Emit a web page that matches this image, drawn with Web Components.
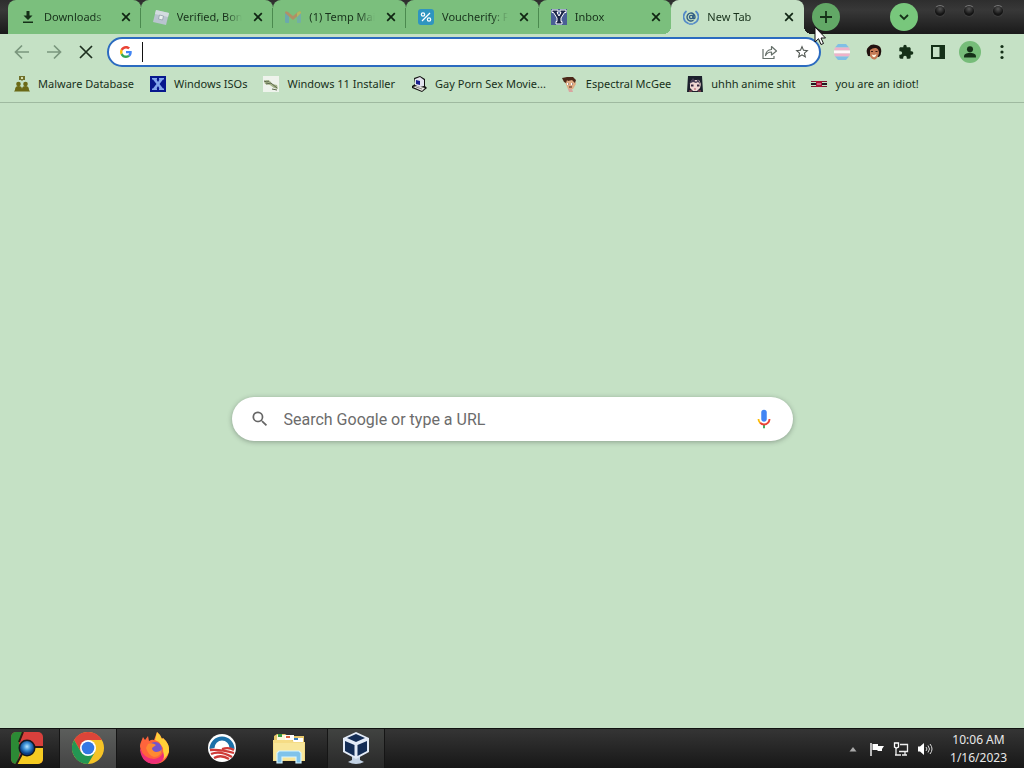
<!DOCTYPE html>
<html lang="en">
<head>
<meta charset="utf-8">
<title>New Tab</title>
<style>
    :root {
        --page: #c5e1c5;
        --tab: #7bbf7d;
        --ink: #17301a;
        --ui-font: "Noto Sans", "Open Sans", sans-serif;
    }
    html, body {
        height: 100%;
        margin: 0;
    }
    body {
        background: var(--page);
        color: var(--ink);
        font: 11px/16px var(--ui-font);
        overflow: hidden;
    }
</style>
</head>
<body>
<desktop-screen></desktop-screen>

<script>
const icons = {
    download: ['0 0 16 16', '<path d="M6.500 2h3v4.500h3L8 11 3.500 6.500h3zM3 12.500h10v1.500H3z" fill="#153018"/>'],
    roblox: ['0 0 16 16', '<path d="M3 1l13 3-3 12-13-3z" fill="#b9c4cf"/><path d="M3 1l13 3-1 4L2 5z" fill="#d3dcdf"/><path d="M6.500 6l4 1-1 4-4-1z" fill="#e9f1ee" stroke="#8c9ba5" stroke-width=".7"/>'],
    gmail: ['0 0 16 16', '<g opacity=".5"><path d="M0 3h4v11H1.500Q0 14 0 12.500z" fill="#5e92dc"/><path d="M12 3h4v9.500q0 1.500-1.500 1.500H12z" fill="#6da0c9"/><path d="M0 4q0-3 3-1l5 4 5-4q3-2 3 1L8 11z" fill="#e8634e"/><path d="M12 4l1-1q3-2 3 1l-4 4z" fill="#e9b544"/></g>'],
    voucherify: ['0 0 16 16', '<rect width="16" height="16" rx="3" fill="#2f95c0"/><path d="M4 12l8-8" stroke="#fff" stroke-width="1.300"/><circle cx="5" cy="5.500" r="1.700" fill="none" stroke="#fff" stroke-width="1.200"/><circle cx="11" cy="10.500" r="1.700" fill="none" stroke="#fff" stroke-width="1.200"/>'],
    inbox: ['0 0 16 16', '<path d="M0 0h16v16H0z" fill="#4a5f96"/><path d="M1 1h6v2.500H6L8 7l2-3.500H9V1h6v2.500h-1.500L10 9v3.500h1V15H5v-2.500h1V9L2.500 3.500H1z" fill="#1b2548" stroke="#fff" stroke-width="1"/>'],
    swirl: ['0 0 16 16', '<g fill="none" stroke-linecap="round"><path d="M3 2.500A7 7 0 0 0 5 14.300M13 2.500A7 7 0 0 1 11 14.300M6.500 15h3" stroke="#5289c8" stroke-width="1.700"/><path d="M10 11.500A4 4 0 1 1 12 8q0 2-1.800 1.500V6" stroke="#315e83" stroke-width="1.400"/><circle cx="8.200" cy="8" r="1.700" stroke="#315e83" stroke-width="1.300"/></g>'],
    close: ['0 0 16 16', '<path d="M4.200 4.200l7.600 7.600M11.800 4.200l-7.600 7.600" stroke="#102513" stroke-width="1.700"/>'],
    plus: ['0 0 16 16', '<path d="M8 2v12M2 8h12" stroke="#153018" stroke-width="1.800"/>'],
    chevron: ['0 0 16 16', '<path d="M4 6l4 4 4-4" fill="none" stroke="#153018" stroke-width="1.800"/>'],
    back: ['0 0 16 16', '<path d="M15 8H2M8 1.500L1.500 8 8 14.500" fill="none" stroke="#7a967d" stroke-width="1.700"/>'],
    forward: ['0 0 16 16', '<path d="M1 8h13M8 1.500L14.500 8 8 14.500" fill="none" stroke="#7a967d" stroke-width="1.700"/>'],
    stop: ['0 0 16 16', '<path d="M2 2l12 12M14 2L2 14" stroke="#1d2f1f" stroke-width="1.700"/>'],
    google: ['0 0 48 48', '<path fill="#ea4335" d="M24 9.500c3.540 0 6.710 1.220 9.210 3.600l6.850-6.850C35.900 2.380 30.470 0 24 0 14.620 0 6.510 5.380 2.560 13.220l7.980 6.190C12.430 13.720 17.740 9.500 24 9.500z"/><path fill="#4285f4" d="M46.980 24.550c0-1.570-.15-3.090-.38-4.550H24v9.020h12.940c-.58 2.960-2.260 5.480-4.780 7.180l7.730 6c4.510-4.180 7.090-10.360 7.090-17.650z"/><path fill="#fbbc05" d="M10.530 28.590A14.500 14.500 0 0 1 9.770 24c0-1.600.27-3.140.76-4.590l-7.980-6.190A23.900 23.900 0 0 0 0 24c0 3.880.92 7.540 2.560 10.780z"/><path fill="#34a853" d="M24 48c6.480 0 11.930-2.130 15.890-5.810l-7.730-6c-2.150 1.450-4.920 2.300-8.160 2.300-6.260 0-11.570-4.220-13.470-9.910l-7.980 6.190C6.510 42.620 14.620 48 24 48z"/>'],
    share: ['0 0 16 16', '<path d="M1 5v9.500h11V12M3.500 11.500q.5-5.500 6-6V2.500l5 4.500-5 4V8q-4 0-6 3.500z" fill="none" stroke="#66706a" stroke-width="1.200" stroke-linejoin="round"/>'],
    star: ['0 0 24 24', '<path d="M22 9.240l-7.190-.62L12 2 9.190 8.630 2 9.240l5.460 4.730L5.820 21 12 17.270 18.180 21l-1.630-7.030zM12 15.400l-3.760 2.270 1-4.280-3.320-2.880 4.380-.38L12 6.100l1.710 4.040 4.380.38-3.320 2.880 1 4.280z" fill="#4f5550"/>'],
    stripes: ['0 0 16 16', '<path d="M4 0h8l3 3.500H1z" fill="#80bfe5"/><path d="M1 3.500h14l1 3H0z" fill="#efb2ca"/><path d="M0 6.500h16v3H0z" fill="#fff8fa"/><path d="M0 9.500h16l-1 3H1z" fill="#efb2ca"/><path d="M1 12.500h14L12 16H4z" fill="#80bfe5"/>'],
    face: ['0 0 16 16', '<path d="M2 12Q-1 6 2.500 3 5 0 9 .7q5 .3 6 4.300 1 5-2 8z" fill="#21110f"/><path d="M4 6q3-2.500 6-2 3 1 3 5-1 5-4 6.500-3 .5-5-3.500z" fill="#c67a54"/><path d="M5 7.500h2M9.500 7.500h2" stroke="#3b1c14"/><path d="M5.500 10.500q3 1 5-.5-.5 3-2 3.300-2 0-3-2.800z" fill="#fff3df"/>'],
    puzzle: ['0 0 24 24', '<path d="M20.500 11H19V7c0-1.100-.9-2-2-2h-4V3.500a2.500 2.500 0 0 0-5 0V5H4c-1.100 0-2 .9-2 2v3.800h1.500a2.700 2.700 0 0 1 0 5.400H2V20c0 1.100.9 2 2 2h3.800v-1.500a2.700 2.700 0 0 1 5.400 0V22H17c1.100 0 2-.9 2-2v-4h1.500a2.500 2.500 0 0 0 0-5z" fill="#153018"/>'],
    panel: ['0 0 16 16', '<path d="M1 1h14v14H1zm2 2v10h6.500V3z" fill="#153018" fill-rule="evenodd"/>'],
    person: ['0 0 24 24', '<circle cx="12" cy="12" r="12" fill="#76bc79"/><circle cx="12" cy="9" r="3.300" fill="#153018"/><path d="M5.500 18v-1.500c0-3 4.500-3.800 6.500-3.800s6.500.8 6.500 3.800V18z" fill="#153018"/>'],
    dots: ['0 0 16 16', '<g fill="#153018"><circle cx="8" cy="2.500" r="1.600"/><circle cx="8" cy="8" r="1.600"/><circle cx="8" cy="13.500" r="1.600"/></g>'],
    people: ['0 0 16 16', '<path d="M5 0h6v4H9L8 5 7 4H5z" fill="#70702b"/><path d="M7 1h2v2H7z" fill="#d6dfaa"/><circle cx="4.500" cy="8" r="2.300" fill="#6b6916"/><circle cx="11.500" cy="8" r="2.300" fill="#6b6916"/><path d="M1 14q0-4 3.500-4T8 13q0-3 3.500-3t3.500 4l1 1.500H0z" fill="#6b6916"/>'],
    bluex: ['0 0 16 16', '<path d="M0 0h16v16H0z" fill="#07178d"/><path d="M2 2h5v1.500H6.500L8 6l1.500-2.500H9V2h5v1.500h-1L9.500 8l3.500 4.500h1V14H9v-1.500h.5L8 10l-1.500 2.500H7V14H2v-1.500h1L6.500 8 3 3.500H2z" fill="#83a6ed"/>'],
    sketch: ['0 0 16 16', '<path d="M0 0h16v16H0z" fill="#eef3ec"/><path d="M1 5q3-2 6 0l2 3 5 1 1 4-4-1-4-3-5-1z" fill="#a5b48a"/><path d="M1 5l3 1 2-1M3 8l5-1 6 5M9 13l5 1" fill="none" stroke="#5b674c"/>'],
    computer: ['0 0 16 16', '<path d="M3 2l6-2 5 3v7l2 2-5 4-10-4v-2l3-2z" fill="#111"/><path d="M4 3l5-2 4 3v6l-4 1-5-2z" fill="#e3e3ee"/><path d="M5 4l4 1v4L5 8z" fill="#1b208f"/><path d="M2 11l4-1 8 2-3 3z" fill="#e8e8df"/><path d="M5 11l6 2" stroke="#888"/>'],
    cartoon: ['0 0 16 16', '<path d="M3 6l2-3h7l2 5-3 5H6z" fill="#e0ad84"/><path d="M6 13h4l1 3H7z" fill="#d9a5a0"/><path d="M0 2l5-1h6l3 3-1 3-3-3-4 1-1-1-1 3-2-1z" fill="#4c2819"/><path d="M5 8h2m2 0h2" stroke="#fff" stroke-width="2"/><path d="M6 8h1m3 0h1M7 11h3" stroke="#54231b"/>'],
    anime: ['0 0 16 16', '<path d="M1 0h14l1 16H0z" fill="#1c202c"/><path d="M3 7l2-3h7l2 4-1 4-3 3H6l-3-3z" fill="#f1d8d3"/><path d="M2 8l4-6 3 4 2-3 3 6-3-3-2 1-3-1z" fill="#4a4058"/><path d="M4 9.500h2.500m3.500 0h2.500" stroke="#35243e" stroke-width="2"/><path d="M7 13h2M2 15h3m6 0h3" stroke="#b05061"/>'],
    flagline: ['0 0 16 16', '<path d="M0 5.500h16M0 10.500h16" stroke="#7e1830"/><path d="M0 8h16" stroke="#221820" stroke-width="2"/><path d="M5 5h6v6H5z" fill="#a81234"/><path d="M6 8h4" stroke="#efb2ca"/>'],
    search: ['0 0 24 24', '<path d="M15.500 14h-.79l-.28-.27A6.500 6.500 0 1 0 13.730 14.430l.27.28v.79l5 4.990L20.490 19zM9.500 14a4.500 4.500 0 1 1 0-9 4.500 4.500 0 0 1 0 9z" fill="#666"/>'],
    mic: ['0 0 24 24', '<path d="M12 15c1.660 0 3-1.310 3-2.970V5a3 3 0 0 0-6 0v7.030C9 13.690 10.340 15 12 15z" fill="#4285f4"/><path d="M11 18.080h2V22h-2z" fill="#34a853"/><path d="M7.050 16.870A6.800 6.800 0 0 1 5 12h2c0 1.450.56 2.420 1.470 3.380z" fill="#fbbc04"/><path d="M12 16.930a4.970 4.970 0 0 1-3.540-1.550l-1.410 1.490A6.980 6.980 0 0 0 12 19c3.870 0 6.990-2.920 6.990-7h-1.990c0 2.920-2.240 4.930-5 4.930z" fill="#ea4335"/>'],
    start: ['0 0 32 32', '<clipPath id="c"><rect width="32" height="32" rx="5"/></clipPath><radialGradient id="b" cy=".4"><stop offset="0" stop-color="#b9e6ff"/><stop offset=".5" stop-color="#3d93d6"/><stop offset="1" stop-color="#0b3f86"/></radialGradient><g clip-path="url(#c)"><path d="M0 0h32v32H0z" fill="#d8403c"/><path d="M0 0h12l-4 10 1 10-3 12H0z" fill="#2c8a35"/><path d="M16 16h16v16H5l5-9z" fill="#f5cb22"/><path d="M8 10l4-10M20 15h12M11 22L5 33" fill="none" stroke="#2a1a12" stroke-width="2"/></g><circle cx="16" cy="16" r="8.500" fill="#15181d"/><circle cx="16" cy="16" r="7" fill="url(#b)"/>'],
    chrome: ['0 0 32 32', '<circle cx="16" cy="16" r="16" fill="#f5c326"/><path d="M2.140 8A16 16 0 0 1 29.860 8H16l-7 12z" fill="#dc4539"/><path d="M2.140 8A16 16 0 0 0 16 32l7-12-7 3-7-3z" fill="#249653"/><circle cx="16" cy="16" r="8" fill="#fff"/><circle cx="16" cy="16" r="6.300" fill="#3478e4"/>'],
    firefox: ['0 0 32 32', '<path d="M2 10l2-5 2 3 3-4 1 5q3-2 5-1l3-8q4 3 5 7l1-1q6 5 6 12a14 14 0 0 1-28 0q-2-4 0-8z" fill="#ff643c"/><path d="M18 0q4 3 5 7l1-1q7 6 6 14-4 10-14 9 10-3 8-13l-4-6-4-2z" fill="#ffcf38"/><path d="M1 16q4 11 14 11 7-1 9-7 4 9-8 12Q3 32 1 18z" fill="#ed2f77"/><circle cx="16" cy="17" r="7" fill="#7655cd"/><path d="M9 12q4-2 8 1l-4 3q0 3 4 4 4 0 6-3-1 8-8 8-6-2-8-9z" fill="#ff8a31"/>'],
    sunrise: ['0 0 28 28', '<circle cx="14" cy="14" r="14" fill="#fff"/><path d="M1.500 15a12.500 12.500 0 0 1 25 0l-5-1a7.500 7.500 0 0 0-15 0z" fill="#1b70a8"/><g fill="none" stroke="#cf3b38" stroke-width="2.300"><path d="M2 16q10-1 24 3M3 20q9-4 21 3M6 24q7-4 15 1M14 15q7-2 12 1"/></g>'],
    folder: ['0 0 32 32', '<path d="M1 4l3-2h8l3 2h16v25H1z" fill="#e7c76a"/><path d="M4 3h9v5H4z" fill="#fff9dd"/><path d="M5 2h4v3H5z" fill="#3b9b42"/><path d="M12 3h9v5h-9z" fill="#fff"/><path d="M13 4h4v2h-4z" fill="#df6540"/><path d="M20 6h10v4H20z" fill="#fff"/><path d="M21 6h4v2h-4z" fill="#357bb8"/><path d="M0 8h18l3 2h11v19H0z" fill="#f5dc85"/><path d="M1 11h30v17H1z" fill="#f8e69a"/><path d="M4 31V21l2-2h20l2 2v10h-5v-6H9v6z" fill="#7fc3ea" stroke="#d6f5ff" stroke-width="1.200"/>'],
    box: ['0 0 32 32', '<path d="M12 24h8v4l4 2q-8 4-16 0l4-2z" fill="#c3d2e4"/><path d="M16 0l13 6v14l-13 7-13-7V6z" fill="#e3ebf7"/><path d="M16 2l9 4-9 4-9-4zM5 9l9.500 4v11L5 19zM27 9l-9.500 4v11l9.500-5z" fill="#142d55"/>'],
    up: ['0 0 16 16', '<path d="M4.500 10.500L8 6l3.500 4.500z" fill="#a9a9a9"/>'],
    flag: ['0 0 16 16', '<path d="M2 2v13" stroke="#eee" stroke-width="1.500"/><path d="M3.500 3H9v2h6l-2 3v2H9L8 9H3.500z" fill="#fff"/>'],
    network: ['0 0 16 16', '<path d="M7 3.500h7.500v7H6M9 14h5m-2-3v3M3 7v7M2 14h6" fill="none" stroke="#eee" stroke-width="1.300"/><path d="M1.500 2h4v4l-2 1-2-1z" fill="none" stroke="#fff" stroke-width="1.300"/>'],
    speaker: ['0 0 16 16', '<path d="M1 5.500h2L7 2v12l-4-3.500H1z" fill="#fff"/><path d="M9 6q2 2 0 4M11 4.500q3 3.500 0 7M13 3q4 5 0 10" fill="none" stroke="#ddd"/>'],
    cursor: ['0 0 12 20', '<path d="M1 1v15l3.500-3.300L7 18.500l2.500-1-2.500-5.500h4.500z" fill="#fff" stroke="#111" stroke-width="1"/>']
};

class UiIcon extends HTMLElement {
    constructor() {
        super();
        this.attachShadow({ mode: 'open' });
    }

    connectedCallback() {
        const [box, shapes] = icons[this.getAttribute('name')];
        const size = this.getAttribute('size') || 16;
        this.shadowRoot.innerHTML = `
            <style>
                :host { display: block; flex: none; width: ${size}px; height: ${size}px; }
                svg { display: block; width: 100%; height: 100%; }
            </style>
            <svg viewBox="${box}" aria-hidden="true">${shapes}</svg>
        `;
    }
}

class BrowserTab extends HTMLElement {
    constructor() {
        super();
        this.attachShadow({ mode: 'open' });
    }

    connectedCallback() {
        this.shadowRoot.innerHTML = `
            <style>
                :host {
                    display: flex;
                    flex: 1;
                    min-width: 0;
                    box-sizing: border-box;
                    align-items: center;
                    gap: 8px;
                    padding: 0 7px 0 12px;
                    background: var(--tab);
                    border-radius: 8px 8px 0 0;
                }
                :host([divided]) { background: linear-gradient(#4b8a4f, #4b8a4f) right 8px / 1px 20px no-repeat var(--tab); background-position: right 8px; }
                :host([active]) { position: relative; background: var(--page); }
                /* curved feet of the selected tab */
                :host([active])::before, :host([active])::after {
                    content: "";
                    position: absolute;
                    bottom: 0;
                    width: 8px;
                    height: 8px;
                }
                :host([active])::before { right: 100%; background: radial-gradient(circle at 0 0, transparent 8px, var(--page) 8px); }
                :host([active])::after { left: 100%; background: radial-gradient(circle at 100% 0, transparent 8px, var(--page) 8px); }
                .title {
                    flex: 1;
                    overflow: hidden;
                    white-space: nowrap;
                    -webkit-mask-image: linear-gradient(to right, #000 75%, transparent);
                    mask-image: linear-gradient(to right, #000 75%, transparent);
                }
                button { border: 0; padding: 0; background: none; }
            </style>
            <ui-icon name="${this.getAttribute('icon')}"></ui-icon>
            <span class="title"><slot></slot></span>
            <button aria-label="Close tab"><ui-icon name="close"></ui-icon></button>
        `;
    }
}

class TabStrip extends HTMLElement {
    constructor() {
        super();
        this.attachShadow({ mode: 'open' });
        this.shadowRoot.innerHTML = `
            <style>
                :host {
                    display: flex;
                    height: 34px;
                    background: linear-gradient(#2e2e2e, #383838 30%, #1a1a1a);
                }
                .tabs { display: flex; flex: 1; min-width: 0; padding-left: 8px; }
                .controls { display: flex; align-items: center; padding: 0 20px 0 8px; }
                .round {
                    display: grid;
                    place-items: center;
                    width: 28px;
                    height: 28px;
                    margin-right: 50px;
                    padding: 0;
                    border: 0;
                    border-radius: 50%;
                    background: #62a866;
                }
                .search { margin-right: 16px; background: #78c77c; }
                .lights { display: flex; gap: 17px; align-self: flex-start; padding-top: 5px; }
                .lights button {
                    width: 12px;
                    height: 12px;
                    padding: 0;
                    border: 1px solid #3c3c3c;
                    border-top-color: #777;
                    border-radius: 50%;
                    background: radial-gradient(circle at 50% 30%, #555, #151515 60%);
                }
            </style>
            <div class="tabs">
                <browser-tab icon="download" divided>Downloads</browser-tab>
                <browser-tab icon="roblox" divided>Verified, Bon</browser-tab>
                <browser-tab icon="gmail" divided>(1) Temp Mail</browser-tab>
                <browser-tab icon="voucherify" divided>Voucherify: F</browser-tab>
                <browser-tab icon="inbox">Inbox</browser-tab>
                <browser-tab icon="swirl" active>New Tab</browser-tab>
            </div>
            <div class="controls">
                <button class="round" aria-label="New tab"><ui-icon name="plus"></ui-icon></button>
                <button class="round search" aria-label="Search tabs"><ui-icon name="chevron"></ui-icon></button>
                <div class="lights">
                    <button aria-label="Minimize"></button>
                    <button aria-label="Maximize"></button>
                    <button aria-label="Close"></button>
                </div>
            </div>
        `;
    }
}

class BrowserToolbar extends HTMLElement {
    constructor() {
        super();
        this.attachShadow({ mode: 'open' });
        this.shadowRoot.innerHTML = `
            <style>
                :host { display: flex; align-items: center; height: 36px; padding: 0 6px; }
                button { display: grid; place-items: center; width: 32px; height: 32px; padding: 0; border: 0; background: none; }
                .address {
                    display: flex;
                    flex: 1;
                    box-sizing: border-box;
                    align-items: center;
                    height: 30px;
                    margin: 0 5px;
                    padding: 0 1px 0 11px;
                    border: 2px solid #2b6bc0;
                    border-radius: 15px;
                    background: #fff;
                }
                .address ui-icon[name="google"] { margin-right: 10px; }
                .caret { width: 1px; height: 20px; background: #111; }
                input { flex: 1; min-width: 0; padding: 0; border: 0; outline: 0; background: none; font: 14px/20px var(--ui-font); }
            </style>
            <button aria-label="Back"><ui-icon name="back"></ui-icon></button>
            <button aria-label="Forward"><ui-icon name="forward"></ui-icon></button>
            <button aria-label="Stop"><ui-icon name="stop"></ui-icon></button>
            <div class="address">
                <ui-icon name="google" size="12"></ui-icon>
                <span class="caret"></span>
                <input type="text" aria-label="Address and search bar">
                <button aria-label="Share"><ui-icon name="share"></ui-icon></button>
                <button aria-label="Bookmark"><ui-icon name="star"></ui-icon></button>
            </div>
            <button aria-label="Pride extension"><ui-icon name="stripes"></ui-icon></button>
            <button aria-label="Face extension"><ui-icon name="face"></ui-icon></button>
            <button aria-label="Extensions"><ui-icon name="puzzle"></ui-icon></button>
            <button aria-label="Side panel"><ui-icon name="panel"></ui-icon></button>
            <button aria-label="Profile"><ui-icon name="person" size="22"></ui-icon></button>
            <button aria-label="Menu"><ui-icon name="dots"></ui-icon></button>
        `;
    }
}

class BookmarkLink extends HTMLElement {
    constructor() {
        super();
        this.attachShadow({ mode: 'open' });
    }

    connectedCallback() {
        this.shadowRoot.innerHTML = `
            <style>
                :host { display: block; }
                a { display: flex; align-items: center; gap: 8px; color: inherit; text-decoration: none; white-space: nowrap; }
            </style>
            <a href="#"><ui-icon name="${this.getAttribute('icon')}"></ui-icon><span><slot></slot></span></a>
        `;
    }
}

class BookmarkBar extends HTMLElement {
    constructor() {
        super();
        this.attachShadow({ mode: 'open' });
        this.shadowRoot.innerHTML = `
            <style>
                :host {
                    display: flex;
                    align-items: center;
                    gap: 16px;
                    height: 28px;
                    padding: 0 14px 4px;
                    border-bottom: 1px solid #9fb9a0;
                }
            </style>
            <bookmark-link icon="people">Malware Database</bookmark-link>
            <bookmark-link icon="bluex">Windows ISOs</bookmark-link>
            <bookmark-link icon="sketch">Windows 11 Installer</bookmark-link>
            <bookmark-link icon="computer">Gay Porn Sex Movie...</bookmark-link>
            <bookmark-link icon="cartoon">Espectral McGee</bookmark-link>
            <bookmark-link icon="anime">uhhh anime shit</bookmark-link>
            <bookmark-link icon="flagline">you are an idiot!</bookmark-link>
        `;
    }
}

class NewTabPage extends HTMLElement {
    constructor() {
        super();
        this.attachShadow({ mode: 'open' });
        this.shadowRoot.innerHTML = `
            <style>
                :host { display: grid; place-items: center; padding-top: 7px; }
                form {
                    display: flex;
                    box-sizing: border-box;
                    align-items: center;
                    width: 90%;
                    max-width: 561px;
                    height: 44px;
                    padding: 0 18px;
                    border-radius: 22px;
                    background: #fff;
                    box-shadow: 0 1px 5px rgba(32, 33, 36, .35);
                }
                input {
                    flex: 1;
                    min-width: 0;
                    margin-left: 14px;
                    padding: 2px 0 0;
                    border: 0;
                    outline: 0;
                    font: 16px/24px Roboto, sans-serif;
                }
                input::placeholder { color: #6c6c6c; opacity: 1; }
                button { padding: 0; border: 0; background: none; }
            </style>
            <form>
                <ui-icon name="search" size="20"></ui-icon>
                <input type="text" aria-label="Search" placeholder="Search Google or type a URL">
                <button type="button" aria-label="Search by voice"><ui-icon name="mic" size="22"></ui-icon></button>
            </form>
        `;
    }
}

class TaskBar extends HTMLElement {
    constructor() {
        super();
        this.attachShadow({ mode: 'open' });
        this.shadowRoot.innerHTML = `
            <style>
                :host {
                    display: flex;
                    box-sizing: border-box;
                    height: 40px;
                    border-top: 1px solid #101210;
                    background: linear-gradient(#353535, #171717);
                    color: #e8e8e8;
                }
                button { display: grid; place-items: center; padding: 0 0 2px; border: 0; background: none; }
                .start { width: 54px; margin-right: 5px; }
                .apps { display: flex; flex: 1; gap: 9px; }
                .apps button { box-sizing: border-box; width: 58px; border: solid transparent; border-width: 0 1px; }
                .apps .open { border-color: #151515; background: linear-gradient(#414341, #292929); }
                .apps .current { background: linear-gradient(#5c5e5c, #444); }
                .tray { display: flex; align-items: center; gap: 8px; padding-right: 17px; }
                time { text-align: center; font: 12px/18px var(--ui-font); white-space: nowrap; margin-left: 9px; }
            </style>
            <button class="start" aria-label="Start"><ui-icon name="start" size="32"></ui-icon></button>
            <div class="apps">
                <button class="open current" aria-label="Chrome"><ui-icon name="chrome" size="32"></ui-icon></button>
                <button aria-label="Firefox"><ui-icon name="firefox" size="32"></ui-icon></button>
                <button aria-label="Sunrise"><ui-icon name="sunrise" size="28"></ui-icon></button>
                <button aria-label="Explorer"><ui-icon name="folder" size="32"></ui-icon></button>
                <button class="open" aria-label="Virtual machine"><ui-icon name="box" size="32"></ui-icon></button>
            </div>
            <div class="tray">
                <ui-icon name="up"></ui-icon>
                <ui-icon name="flag"></ui-icon>
                <ui-icon name="network"></ui-icon>
                <ui-icon name="speaker"></ui-icon>
                <time datetime="2023-01-16T10:06">10:06 AM<br>1/16/2023</time>
            </div>
        `;
    }
}

class DesktopScreen extends HTMLElement {
    constructor() {
        super();
        this.attachShadow({ mode: 'open' });
        this.shadowRoot.innerHTML = `
            <style>
                :host { display: flex; flex-direction: column; min-height: 100vh; }
                new-tab-page { flex: 1; }
                .pointer { position: absolute; left: 810px; top: 26px; }
            </style>
            <tab-strip></tab-strip>
            <browser-toolbar></browser-toolbar>
            <bookmark-bar></bookmark-bar>
            <new-tab-page></new-tab-page>
            <task-bar></task-bar>
            <ui-icon class="pointer" name="cursor" size="20"></ui-icon>
        `;
    }
}

customElements.define('ui-icon', UiIcon);
customElements.define('browser-tab', BrowserTab);
customElements.define('tab-strip', TabStrip);
customElements.define('browser-toolbar', BrowserToolbar);
customElements.define('bookmark-link', BookmarkLink);
customElements.define('bookmark-bar', BookmarkBar);
customElements.define('new-tab-page', NewTabPage);
customElements.define('task-bar', TaskBar);
customElements.define('desktop-screen', DesktopScreen);
</script>
</body>
</html>
